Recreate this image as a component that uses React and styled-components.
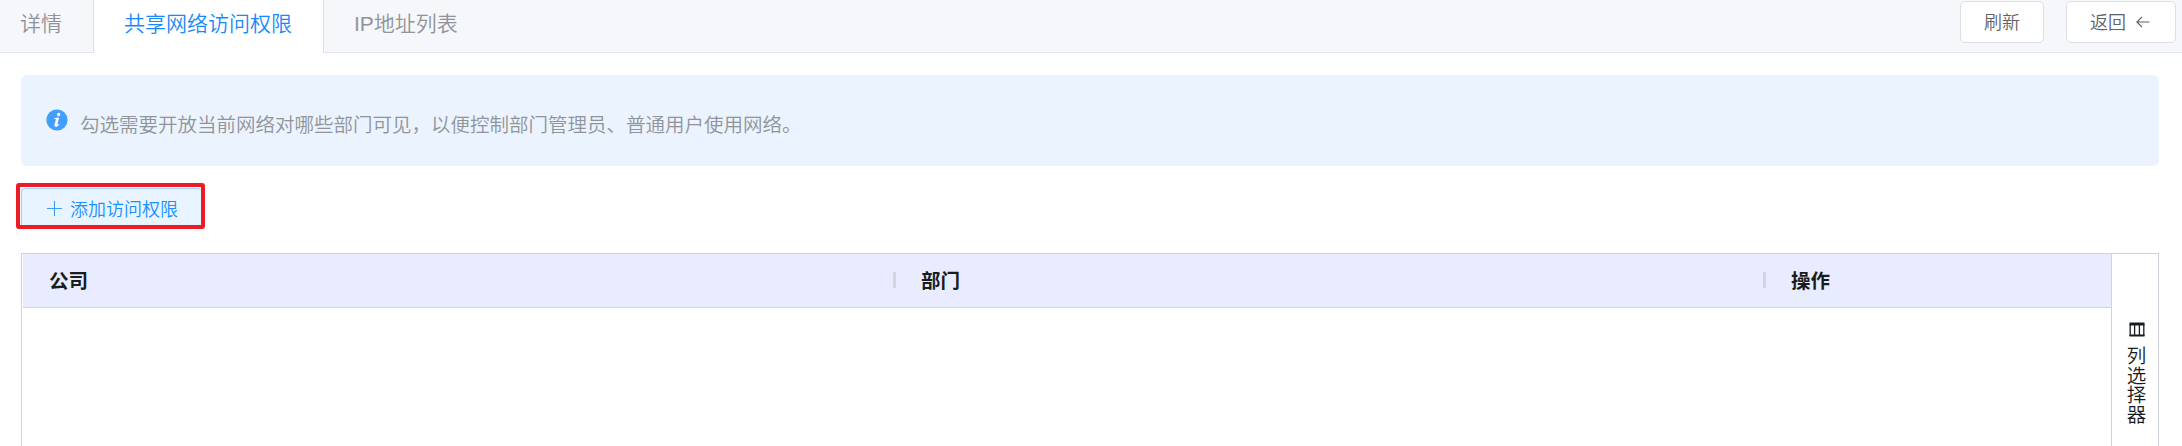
import React from "react";
import styled, { createGlobalStyle } from "styled-components";

const GlobalStyle = createGlobalStyle`
  *, *::before, *::after { box-sizing: border-box; }
  html, body { margin: 0; background: #fff; overflow: hidden; }
  body { font-family: "Liberation Sans", "Noto Sans CJK SC", sans-serif; font-weight: 350; }
`;

const Page = styled.div`
  height: 446px;
  display: flex;
  flex-direction: column;
  overflow: hidden;
`;

const TopBar = styled.header`
  height: 53px;
  flex: none;
  display: flex;
  justify-content: space-between;
  background: linear-gradient(#dfe4ed, #dfe4ed) bottom / 100% 1px no-repeat #f5f7fa;
`;

const Tabs = styled.nav`
  display: flex;
`;

const Tab = styled.div`
  height: 53px;
  padding: 0 30px;
  border: solid ${(p) => (p.$active ? "#dcdfe6" : "transparent")};
  border-width: 0 1px;
  background: ${(p) => (p.$active ? "#fff" : "transparent")};
  color: ${(p) => (p.$active ? "#1989fa" : "#909399")};
  font-size: 21px;
  line-height: 47px;
  white-space: nowrap;
  &:first-child { padding-left: 20px; padding-right: 31px; border-width: 0; }
  &:nth-child(2) { padding-right: 31px; }
  &:last-child { border-left-width: 0; }
`;

const Actions = styled.div`
  display: flex;
  gap: 22px;
  padding: 1px 6px 0 0;
`;

const Button = styled.button`
  height: 42px;
  width: ${(p) => p.$width}px;
  display: flex;
  align-items: center;
  justify-content: center;
  gap: 10px;
  padding: 0 0 2px;
  border: 1px solid #dcdfe6;
  border-radius: 5px;
  background: #fff;
  color: #606266;
  font: inherit;
  font-size: 18px;
  white-space: nowrap;
  svg { margin: 2px 2px 0 0; }
`;

const Content = styled.main`
  flex: 1;
  min-height: 0;
  display: flex;
  flex-direction: column;
  padding: 22px 23px 0 21px;
`;

const Notice = styled.div`
  height: 91px;
  flex: none;
  display: flex;
  align-items: center;
  padding-left: 25px;
  border-radius: 6px;
  background: #ebf3ff;
  color: #909399;
  font-size: 19.5px;
  white-space: nowrap;
  svg { margin: 0 12px 1px 0; }
  span { padding-top: 5px; }
`;

const Highlight = styled.div`
  width: 189px;
  height: 46px;
  flex: none;
  margin: 17px 0 0 -5px;
  border: 4px solid #ed1c24;
  border-radius: 3px;
  background: #fff;
  padding: 1px 0 0 1px;
`;

const AddButton = styled.button`
  width: 100%;
  height: 100%;
  display: flex;
  align-items: center;
  gap: 8px;
  padding: 2px 0 0 25px;
  border: solid #a3d0fd;
  border-width: 1px 0 0 1px;
  border-radius: 4px 3px 0 0;
  background: #e8f4ff;
  color: #1890ff;
  font: inherit;
  font-size: 18px;
  white-space: nowrap;
`;

const TableFrame = styled.section`
  flex: 1;
  margin-top: 24px;
  display: flex;
  border: solid #d0d3de;
  border-width: 1px 1px 0;
`;

const Grid = styled.div`
  flex: 1;
  padding-left: 1px;
`;

const HeaderRow = styled.div`
  height: 54px;
  display: grid;
  grid-template-columns: 873px 870px 1fr;
  border-bottom: 1px solid #d0d3de;
  background: #e9ecfe;
`;

const HeaderCell = styled.div`
  display: flex;
  align-items: center;
  justify-content: space-between;
  padding: 0 0 2px ${(p) => (p.$first ? 26 : 25)}px;
  color: #181d1f;
  font-size: 19.5px;
  font-weight: 700;
`;

const Resizer = styled.i`
  width: 3px;
  height: 16px;
  background: #d3d6de;
`;

const SideBar = styled.aside`
  width: 47px;
  border-left: 1px solid #d0d3de;
  display: flex;
  flex-direction: column;
  align-items: center;
  padding: 68px 0 0 3px;
  color: #181d1f;
  svg { flex: none; }
`;

const SideLabel = styled.span`
  width: 20px;
  margin-top: 10px;
  font-size: 19.5px;
  line-height: 19.5px;
  word-break: break-all;
  text-align: center;
`;

const InfoIcon = () => (
  <svg width="22" height="22" viewBox="0 0 22 22">
    <circle cx="11" cy="11" r="10.6" fill="#409eff" />
    <circle cx="12.7" cy="5.5" r="1.65" fill="#fff" />
    <path d="M8 9.6c1.5-.8 2.8-1.2 4-1.2.8 0 1.1.5.9 1.3l-1.5 5.6c-.2.8.4.7 1.6-.4l.4.5c-1.3 1.5-2.5 2.3-3.6 2.3-1.2 0-1.6-.8-1.3-2l1.4-5.1c.2-.6-.2-.8-.7-.7l-1 .3z" fill="#fff" />
  </svg>
);

const ArrowIcon = () => (
  <svg width="14" height="12" viewBox="0 0 14 12" fill="none" stroke="#606266" strokeWidth="1.2">
    <path d="M13.5 6H1M6 .8.9 6 6 11.2" />
  </svg>
);

const PlusIcon = () => (
  <svg width="15" height="15" viewBox="0 0 15 15" stroke="#3d9bfb" strokeWidth="1.1">
    <path d="M0 7.5h15M7.5 0v15" />
  </svg>
);

const ColumnsIcon = () => (
  <svg width="16" height="15" viewBox="0 0 16 15" fill="none" stroke="#181d1f">
    <path d="M.5 2h15" strokeWidth="3" />
    <path d="M1.2 2v12M5.6 2v12M10.4 2v12M14.8 2v12" strokeWidth="1.3" />
    <path d="M.5 13.5h15" strokeWidth="2" />
  </svg>
);

const tabs = ["详情", "共享网络访问权限", "IP地址列表"];
const columns = ["公司", "部门", "操作"];

export default function App() {
  return (
    <Page lang="zh-CN">
      <GlobalStyle />
      <TopBar>
        <Tabs>
          {tabs.map((name, i) => (
            <Tab key={name} $active={i === 1}>{name}</Tab>
          ))}
        </Tabs>
        <Actions>
          <Button $width={84}>刷新</Button>
          <Button $width={110}>返回 <ArrowIcon /></Button>
        </Actions>
      </TopBar>
      <Content>
        <Notice>
          <InfoIcon />
          <span>勾选需要开放当前网络对哪些部门可见，以便控制部门管理员、普通用户使用网络。</span>
        </Notice>
        <Highlight>
          <AddButton><PlusIcon />添加访问权限</AddButton>
        </Highlight>
        <TableFrame>
          <Grid>
            <HeaderRow>
              {columns.map((name, i) => (
                <HeaderCell key={name} $first={i === 0}>
                  {name}
                  {i < columns.length - 1 && <Resizer />}
                </HeaderCell>
              ))}
            </HeaderRow>
          </Grid>
          <SideBar>
            <ColumnsIcon />
            <SideLabel>列选择器</SideLabel>
          </SideBar>
        </TableFrame>
      </Content>
    </Page>
  );
}
